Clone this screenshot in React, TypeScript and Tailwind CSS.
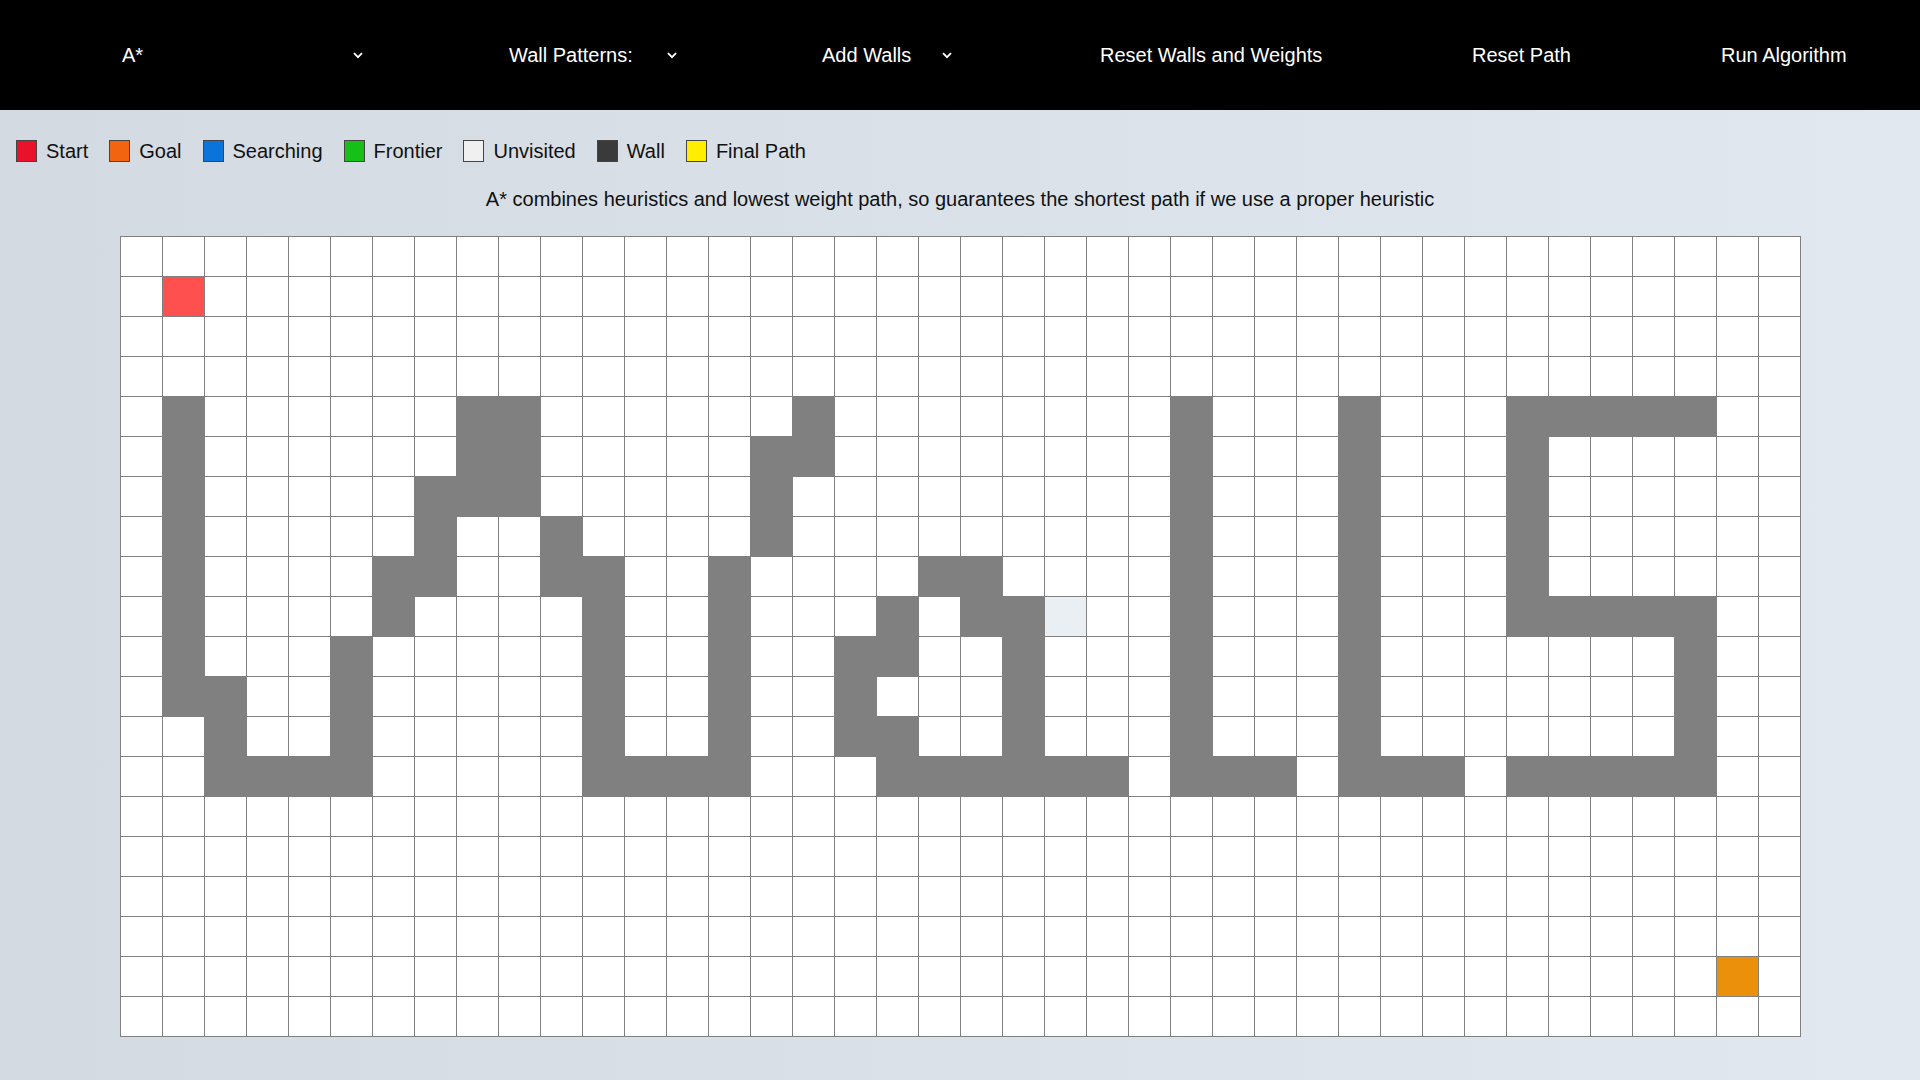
import type { ReactNode } from "react";

const ROWS = 20;
const COLS = 40;

const START = [1, 1];
const GOAL = [18, 38];
const HOVER = [9, 22];

const span = (a: number, b: number) => Array.from({ length: b - a + 1 }, (_, i) => a + i);

// wall layout spelling "Walls", by row
const WALLS: Record<number, number[]> = {
  4: [1, 8, 9, 16, 25, 29, ...span(33, 37)],
  5: [1, 8, 9, 15, 16, 25, 29, 33],
  6: [1, 7, 8, 9, 15, 25, 29, 33],
  7: [1, 7, 10, 15, 25, 29, 33],
  8: [1, 6, 7, 10, 11, 14, 19, 20, 25, 29, 33],
  9: [1, 6, 11, 14, 18, 20, 21, 25, 29, ...span(33, 37)],
  10: [1, 5, 11, 14, 17, 18, 21, 25, 29, 37],
  11: [1, 2, 5, 11, 14, 17, 21, 25, 29, 37],
  12: [2, 5, 11, 14, 17, 18, 21, 25, 29, 37],
  13: [...span(2, 5), ...span(11, 14), ...span(18, 23), ...span(25, 27), ...span(29, 31), ...span(33, 37)],
};

const LEGEND = [
  { label: "Start", color: "bg-[#e8132a]" },
  { label: "Goal", color: "bg-[#f2640f]" },
  { label: "Searching", color: "bg-[#0b74da]" },
  { label: "Frontier", color: "bg-[#16c016]" },
  { label: "Unvisited", color: "bg-[#f0f0f0]" },
  { label: "Wall", color: "bg-[#3a3a3a]" },
  { label: "Final Path", color: "bg-[#ffee00]" },
];

function Chevron() {
  return (
    <svg width="10" height="7" viewBox="0 0 10 7" fill="none" aria-hidden="true">
      <path d="M1 1.2L5 5.2L9 1.2" stroke="white" strokeWidth="1.8" />
    </svg>
  );
}

function NavSelect({ label, width }: { label: string; width: string }) {
  return (
    <div className={`flex items-center justify-between ${width}`}>
      <span>{label}</span>
      <Chevron />
    </div>
  );
}

function NavSlot({ width, children }: { width: string; children: ReactNode }) {
  return <div className={`shrink-0 ${width}`}>{children}</div>;
}

function cellClass(r: number, c: number) {
  if (r === START[0] && c === START[1]) return "bg-[#ff5050]";
  if (r === GOAL[0] && c === GOAL[1]) return "bg-[#ea900b]";
  if (WALLS[r]?.includes(c)) return "bg-[#808080]";
  if (r === HOVER[0] && c === HOVER[1]) return "bg-[#e9eff2]";
  return "bg-white";
}

export default function App() {
  return (
    <div className="min-h-screen bg-linear-to-r from-[#d3dae1] to-[#e1e8ef] font-['Liberation_Sans',Arial,sans-serif]">
      <nav className="flex h-[110px] items-center bg-black pl-[122px] text-[20px] text-white">
        <NavSlot width="w-[387px]">
          <NavSelect label="A*" width="w-[241px]" />
        </NavSlot>
        <NavSlot width="w-[313px]">
          <NavSelect label="Wall Patterns:" width="w-[168px]" />
        </NavSlot>
        <NavSlot width="w-[278px]">
          <NavSelect label="Add Walls" width="w-[130px]" />
        </NavSlot>
        <NavSlot width="w-[372px]">
          <button type="button">Reset Walls and Weights</button>
        </NavSlot>
        <NavSlot width="w-[249px]">
          <button type="button">Reset Path</button>
        </NavSlot>
        <NavSlot width="w-auto">
          <button type="button">Run Algorithm</button>
        </NavSlot>
      </nav>

      <div className="flex items-center gap-[21px] pl-[16px] pt-[30px] text-[20px] text-[#111]">
        {LEGEND.map((item) => (
          <div key={item.label} className="flex h-[22px] items-center gap-[9px]">
            <span className={`h-[22px] w-[21px] border border-[#444] ${item.color}`} />
            <span className="leading-[22px]">{item.label}</span>
          </div>
        ))}
      </div>

      <p className="mt-[25px] text-center text-[20px] leading-[24px] text-[#111]">
        A* combines heuristics and lowest weight path, so guarantees the shortest path if we use a proper heuristic
      </p>

      <div className="mx-auto mt-[25px] grid w-fit grid-cols-[repeat(40,42px)] border-l border-t border-[#808080]">
        {Array.from({ length: ROWS * COLS }, (_, i) => {
          const r = Math.floor(i / COLS);
          const c = i % COLS;
          return <div key={i} className={`h-[40px] border-b border-r border-[#808080] ${cellClass(r, c)}`} />;
        })}
      </div>
    </div>
  );
}
